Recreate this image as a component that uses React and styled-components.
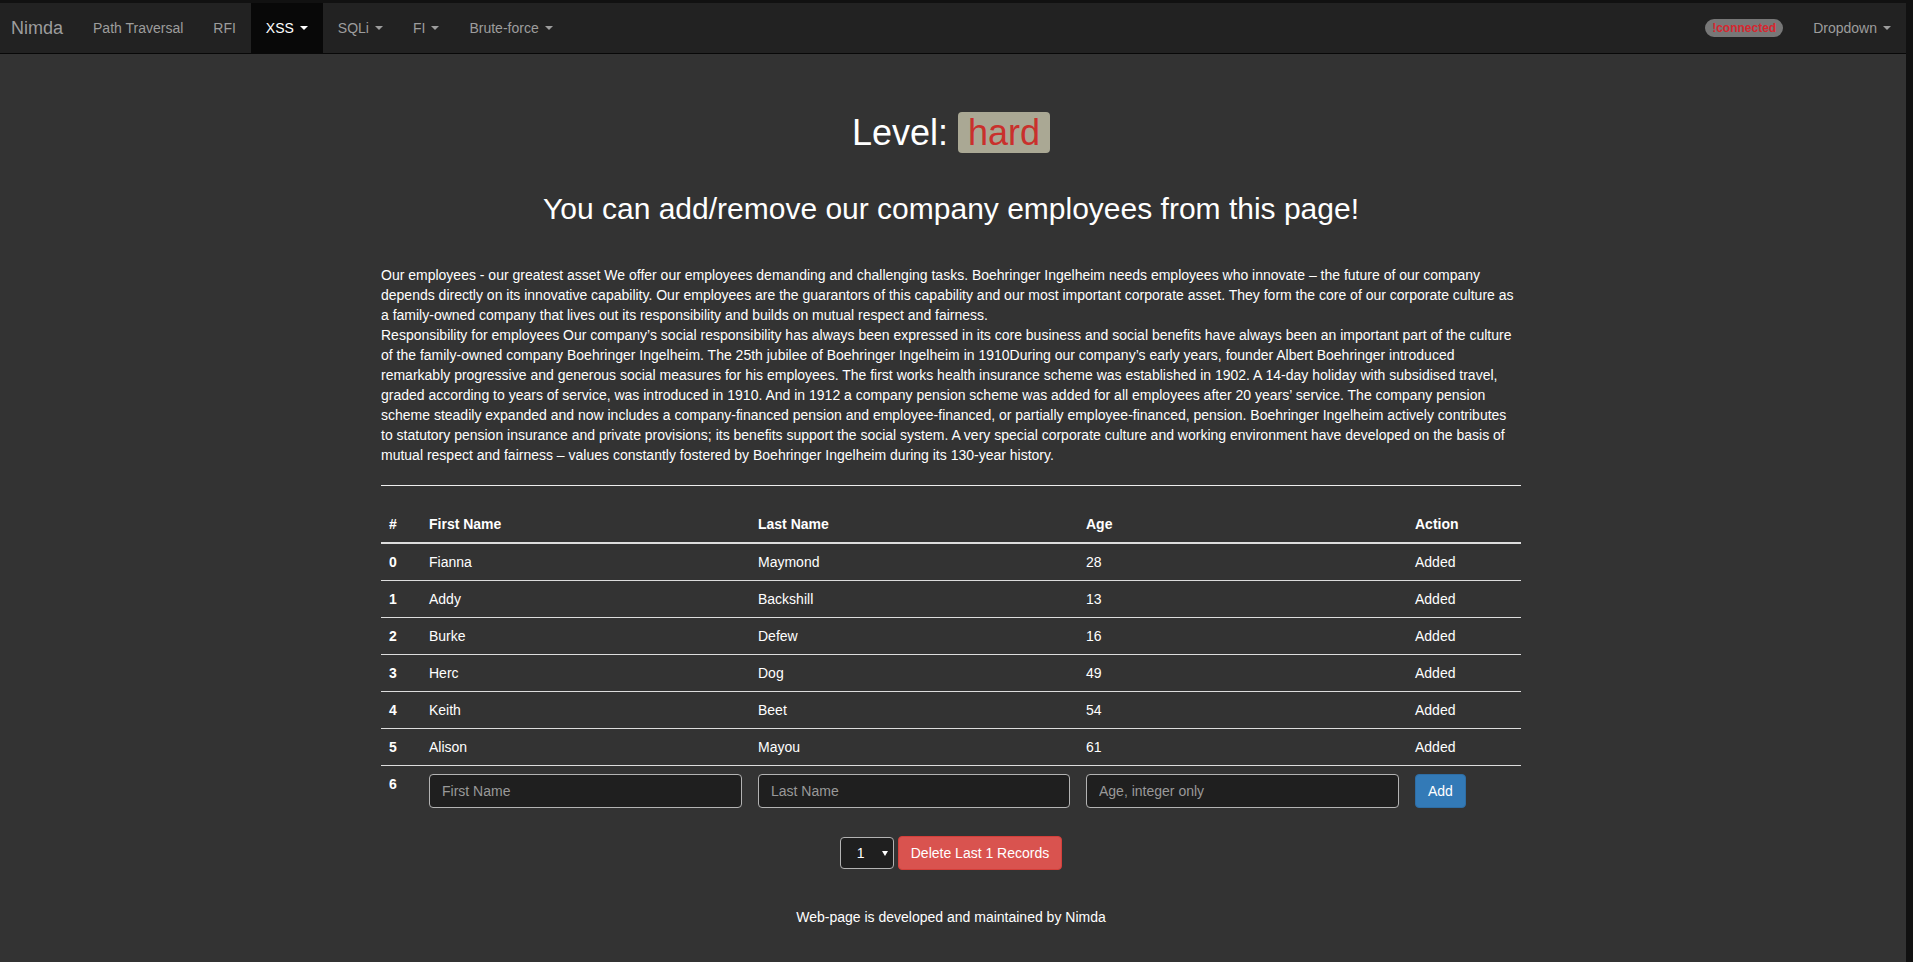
import React from 'react'
import styled, { createGlobalStyle } from 'styled-components'

const GlobalStyle = createGlobalStyle`
  html, body {
    margin: 0;
    padding: 0;
    background: #111;
  }
  body {
    font-family: "Liberation Sans", Arial, Helvetica, sans-serif;
    font-size: 14px;
    line-height: 20px;
    color: #fff;
  }
  * {
    box-sizing: border-box;
  }
`

const employees = [
  { first: 'Fianna', last: 'Maymond', age: 28 },
  { first: 'Addy', last: 'Backshill', age: 13 },
  { first: 'Burke', last: 'Defew', age: 16 },
  { first: 'Herc', last: 'Dog', age: 49 },
  { first: 'Keith', last: 'Beet', age: 54 },
  { first: 'Alison', last: 'Mayou', age: 61 },
]

const navItems = [
  { label: 'Path Traversal' },
  { label: 'RFI' },
  { label: 'XSS', caret: true, active: true },
  { label: 'SQLi', caret: true },
  { label: 'FI', caret: true },
  { label: 'Brute-force', caret: true },
]

export default function App() {
  return (
    <Frame>
      <GlobalStyle />
      <Page>
        <NavBar>
          <Brand href="#">Nimda</Brand>
          <NavList>
            {navItems.map(item => (
              <li key={item.label}>
                <NavLink href="#" $active={item.active}>
                  {item.label}
                  {item.caret && <Caret />}
                </NavLink>
              </li>
            ))}
          </NavList>
          <NavList $right>
            <li>
              <NavText>
                <Badge>!connected</Badge>
              </NavText>
            </li>
            <li>
              <NavLink href="#">
                Dropdown
                <Caret />
              </NavLink>
            </li>
          </NavList>
        </NavBar>

        <Main>
          <Container>
            <Title>
              Level: <LevelTag>hard</LevelTag>
            </Title>
            <Subtitle>You can add/remove our company employees from this page!</Subtitle>

            <Text>
              Our employees - our greatest asset We offer our employees demanding and challenging tasks. Boehringer Ingelheim needs employees who innovate – the future of our company depends directly on its innovative capability. Our employees are the guarantors of this capability and our most important corporate asset. They form the core of our corporate culture as a family-owned company that lives out its responsibility and builds on mutual respect and fairness.
              <br />
              Responsibility for employees Our company’s social responsibility has always been expressed in its core business and social benefits have always been an important part of the culture of the family-owned company Boehringer Ingelheim. The 25th jubilee of Boehringer Ingelheim in 1910During our company’s early years, founder Albert Boehringer introduced remarkably progressive and generous social measures for his employees. The first works health insurance scheme was established in 1902. A 14-day holiday with subsidised travel, graded according to years of service, was introduced in 1910. And in 1912 a company pension scheme was added for all employees after 20 years’ service. The company pension scheme steadily expanded and now includes a company-financed pension and employee-financed, or partially employee-financed, pension. Boehringer Ingelheim actively contributes to statutory pension insurance and private provisions; its benefits support the social system. A very special corporate culture and working environment have developed on the basis of mutual respect and fairness – values constantly fostered by Boehringer Ingelheim during its 130-year history.
            </Text>

            <Rule />

            <Table>
              <thead>
                <tr>
                  <HeadCell $w="40px">#</HeadCell>
                  <HeadCell $w="329px">First Name</HeadCell>
                  <HeadCell $w="328px">Last Name</HeadCell>
                  <HeadCell $w="329px">Age</HeadCell>
                  <HeadCell>Action</HeadCell>
                </tr>
              </thead>
              <tbody>
                {employees.map((e, i) => (
                  <tr key={i}>
                    <IndexCell>{i}</IndexCell>
                    <Cell>{e.first}</Cell>
                    <Cell>{e.last}</Cell>
                    <Cell>{e.age}</Cell>
                    <Cell>Added</Cell>
                  </tr>
                ))}
                <tr>
                  <IndexCell>{employees.length}</IndexCell>
                  <Cell><Field placeholder="First Name" /></Cell>
                  <Cell><Field placeholder="Last Name" /></Cell>
                  <Cell><Field placeholder="Age, integer only" /></Cell>
                  <Cell><Button $kind="primary">Add</Button></Cell>
                </tr>
              </tbody>
            </Table>

            <ActionBar>
              <SelectWrap>
                <Select defaultValue="1">
                  <option value="1">1</option>
                  <option value="2">2</option>
                  <option value="3">3</option>
                </Select>
              </SelectWrap>
              <Button $kind="danger">Delete Last 1 Records</Button>
            </ActionBar>

            <Footer>Web-page is developed and maintained by Nimda</Footer>
          </Container>
        </Main>
      </Page>
    </Frame>
  )
}

const Frame = styled.div`
  min-height: 100vh;
  padding: 3px 7px 0 0;
  background: #111;
`

const Page = styled.div`
  min-height: calc(100vh - 3px);
  background: #333;
`

const NavBar = styled.nav`
  display: flex;
  height: 51px;
  background: #222;
  border-bottom: 1px solid #080808;
`

const Brand = styled.a`
  padding: 15px 15px 15px 11px;
  font-size: 18px;
  line-height: 20px;
  color: #9d9d9d;
  text-decoration: none;
`

const NavList = styled.ul`
  display: flex;
  margin: 0 0 0 ${p => (p.$right ? 'auto' : '0')};
  padding: 0;
  list-style: none;
`

const NavLink = styled.a`
  display: flex;
  align-items: center;
  height: 50px;
  padding: 15px;
  font-size: 14px;
  line-height: 20px;
  color: ${p => (p.$active ? '#fff' : '#9d9d9d')};
  background: ${p => (p.$active ? '#080808' : 'transparent')};
  text-decoration: none;
`

const NavText = styled.div`
  display: flex;
  align-items: center;
  height: 50px;
  padding: 0 15px;
`

const Caret = styled.span`
  display: inline-block;
  width: 0;
  height: 0;
  margin-left: 6px;
  border-top: 4px solid;
  border-left: 4px solid transparent;
  border-right: 4px solid transparent;
`

const Badge = styled.span`
  display: inline-block;
  padding: 3px 7px;
  font-size: 12px;
  font-weight: bold;
  line-height: 12px;
  color: #d8262f;
  background: #777;
  border-radius: 10px;
`

const Main = styled.div`
  padding-right: 4px;
`

const Container = styled.main`
  width: 1140px;
  margin: 0 auto;
`

const Title = styled.h1`
  margin: 59px 0 0;
  font-size: 36px;
  font-weight: normal;
  line-height: 1.1;
  text-align: center;
  color: #fff;
`

const LevelTag = styled.span`
  padding: 0 10px;
  color: #c9302c;
  background: #aaa894;
  border-radius: 4px;
`

const Subtitle = styled.h2`
  margin: 39px 0 0;
  font-size: 30px;
  font-weight: normal;
  line-height: 33px;
  text-align: center;
  color: #fff;
`

const Text = styled.p`
  margin: 40px 0 0;
  line-height: 20px;
`

const Rule = styled.hr`
  margin: 20px 0;
  border: 0;
  border-top: 1px solid #eee;
`

const Table = styled.table`
  width: 100%;
  margin-bottom: 20px;
  border-collapse: collapse;
  table-layout: fixed;
`

const HeadCell = styled.th`
  width: ${p => p.$w || 'auto'};
  padding: 8px;
  text-align: left;
  vertical-align: bottom;
  font-weight: bold;
  border-bottom: 2px solid #ddd;
`

const IndexCell = styled.th`
  padding: 8px;
  text-align: left;
  vertical-align: top;
  font-weight: bold;
  border-top: 1px solid #ddd;
`

const Cell = styled.td`
  padding: 8px;
  vertical-align: top;
  border-top: 1px solid #ddd;
`

const Field = styled.input`
  display: block;
  width: 100%;
  height: 34px;
  padding: 6px 12px;
  font-family: inherit;
  font-size: 14px;
  line-height: 20px;
  color: #fff;
  background: #1f1f1f;
  border: 1px solid #b3b3b3;
  border-radius: 4px;
  &::placeholder {
    color: #999;
  }
`

const Button = styled.button`
  display: inline-block;
  height: 34px;
  padding: 6px 12px;
  font-family: inherit;
  font-size: 14px;
  line-height: 20px;
  color: #fff;
  background: ${p => (p.$kind === 'danger' ? '#d9534f' : '#337ab7')};
  border: 1px solid ${p => (p.$kind === 'danger' ? '#d43f3a' : '#2e6da4')};
  border-radius: 4px;
  cursor: pointer;
`

const ActionBar = styled.div`
  display: flex;
  justify-content: center;
  align-items: center;
  gap: 4px;
`

const SelectWrap = styled.span`
  position: relative;
  display: inline-block;
  &::after {
    content: '';
    position: absolute;
    top: 50%;
    right: 6px;
    margin-top: -2px;
    border-top: 5px solid #fff;
    border-left: 3.5px solid transparent;
    border-right: 3.5px solid transparent;
    pointer-events: none;
  }
`

const Select = styled.select`
  display: block;
  width: 54px;
  height: 32px;
  padding: 0 0 0 16px;
  font-family: inherit;
  font-size: 14px;
  color: #fff;
  background: #1f1f1f;
  border: 1px solid #b3b3b3;
  border-radius: 4px;
  appearance: none;
`

const Footer = styled.footer`
  margin-top: 37px;
  padding-bottom: 40px;
  text-align: center;
`
